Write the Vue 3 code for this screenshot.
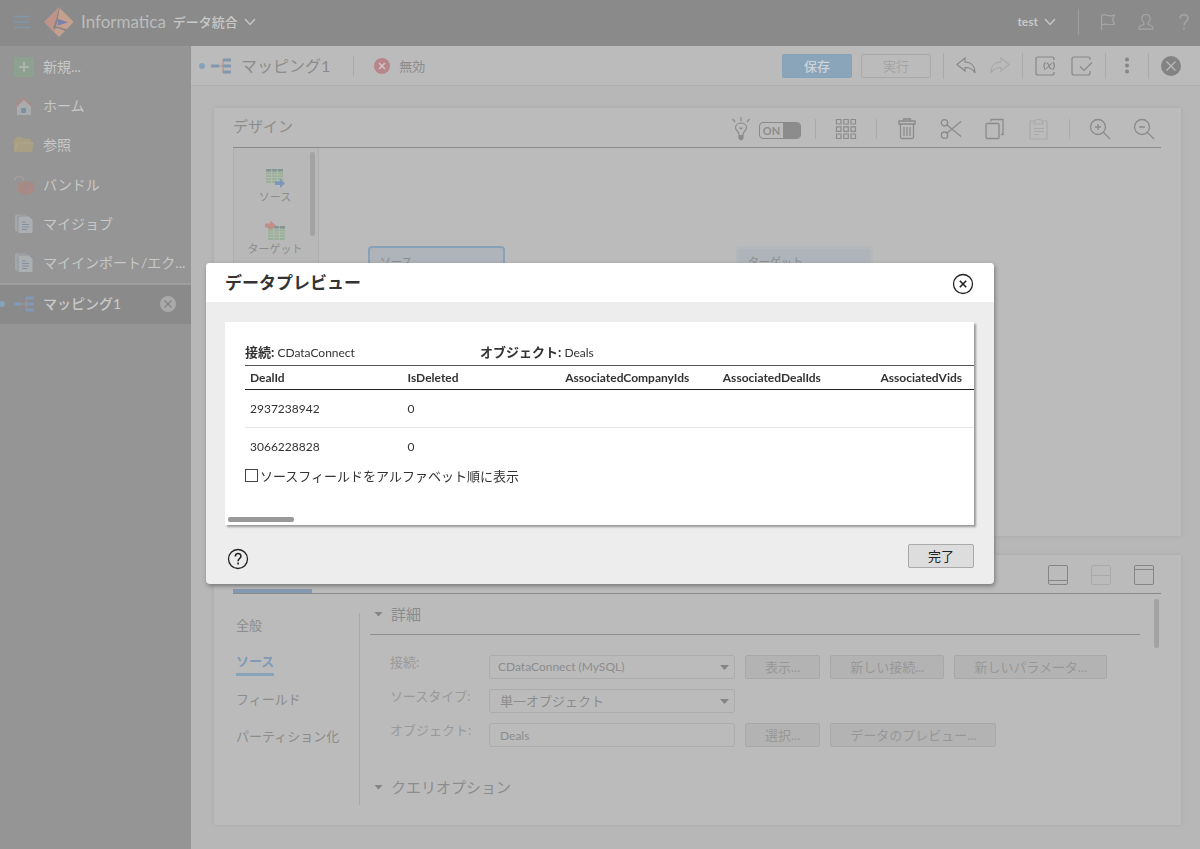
<script setup>
import { ref } from 'vue'

const navItems = [
  { id: 'new', label: '新規...' },
  { id: 'home', label: 'ホーム' },
  { id: 'browse', label: '参照' },
  { id: 'bundle', label: 'バンドル' },
  { id: 'jobs', label: 'マイジョブ' },
  { id: 'jobs', label: 'マイインポート/エク...' },
]
const columns = ['DealId', 'IsDeleted', 'AssociatedCompanyIds', 'AssociatedDealIds', 'AssociatedVids']
const rows = [
  ['2937238942', '0', '', '', ''],
  ['3066228828', '0', '', '', ''],
]
const propertyTabs = ['全般', 'ソース', 'フィールド', 'パーティション化']
const alphabetical = ref(false)
const connection = ref('CDataConnect (MySQL)')
const sourceType = ref('単一オブジェクト')
const objectName = ref('Deals')
</script>

<template>
  <div class="app">
    <header class="topbar">
      <button class="icon-btn menu" aria-label="メニュー">
        <svg width="16" height="14" viewBox="0 0 16 14" stroke="#7f97a8" stroke-width="1.4"><path d="M0 1.5h16M0 7h16M0 12.5h16" /></svg>
      </button>
      <svg class="logo" width="30" height="30" viewBox="0 0 90 90">
        <path d="M45 1 89 45 45 90 1 45Z" fill="#c4a18e" />
        <path d="M45 1 1 45 32 76 41 30Z" fill="#c0938a" />
        <path d="M45 2 38 32 28 62 33 68 39 48 47 4Z" fill="#858585" />
        <path d="M29 57 45 60 72 68 64 72 44 64 29 63Z" fill="#858585" />
        <path d="M40 35 72 46 42 56Z" fill="#7c80ad" />
      </svg>
      <span class="brand">Informatica</span>
      <button class="service">データ統合
        <svg width="12" height="8" viewBox="0 0 12 8" fill="none" stroke="#c5c5c5" stroke-width="1.4"><path d="m1 1 5 5.5L11 1" /></svg>
      </button>
      <div class="top-right">
        <button class="org">test
          <svg width="12" height="8" viewBox="0 0 12 8" fill="none" stroke="#c5c5c5" stroke-width="1.4"><path d="m1 1 5 5.5L11 1" /></svg>
        </button>
        <i class="top-sep"></i>
        <button class="icon-btn" aria-label="通知">
          <svg width="18" height="18" viewBox="0 0 18 18" fill="none" stroke="#a6a6a6" stroke-width="1.2"><path d="M2.500 17V2.500c3-2 5 0 7 .2 2 .4 4 .1 6-.7l-2 4.500 2 4.500c-3 1-4.500 1-6.500.5s-4-1-6.500.7" /></svg>
        </button>
        <button class="icon-btn" aria-label="ユーザー">
          <svg width="18" height="18" viewBox="0 0 18 18" fill="none" stroke="#a6a6a6" stroke-width="1.2"><path d="M6.800 9.500C3.500 6 4.500 1.500 9 1.500s5.500 4.500 2.200 8v2c2 .7 4.800.8 4.800 4.700H2c0-3.900 2.800-4 4.800-4.700Z" /></svg>
        </button>
        <button class="icon-btn" aria-label="ヘルプ">
          <svg width="18" height="18" viewBox="0 0 18 18" fill="none" stroke="#a6a6a6" stroke-width="1.500"><path d="M5 5.500C5 .5 13 .5 13 5c0 3.500-4 3.500-4 7.500M9 14.500v2" /></svg>
        </button>
      </div>
    </header>

    <div class="shell">
      <nav class="sidebar">
        <ul class="nav-list">
          <li v-for="item in navItems" :key="item.label">
            <a href="#" class="nav-link">
              <svg v-if="item.id === 'new'" width="20" height="20" viewBox="0 0 20 20"><rect width="20" height="20" rx="2" fill="#8ea08f" /><path d="M10 5v10M5 10h10" stroke="#b4bab4" stroke-width="1.500" /></svg>
              <svg v-else-if="item.id === 'home'" width="20" height="20" viewBox="0 0 20 20"><path d="M3 9v10h14V9l-7-6Z" fill="#a9abad" /><path d="m1.500 10.500 8.500-8 8.500 8M5 7V2.500" fill="none" stroke="#a98b88" stroke-width="1.800" /><rect x="7" y="12" width="5" height="5" rx="1" fill="#7d90a3" /></svg>
              <svg v-else-if="item.id === 'browse'" width="20" height="20" viewBox="0 0 20 20"><path d="M0 17V5l3-3h5l2 2h7v4h3l-2 9Z" fill="#a89f85" /><path d="M1 16 3 8h16" fill="none" stroke="#b0a78d" /></svg>
              <svg v-else-if="item.id === 'bundle'" width="20" height="20" viewBox="0 0 20 20"><path d="m4 8 8-2 8 2v9l-8 3-8-3Z" fill="#a98a85" /><path d="m4 8 7 2v10M11 10l9-2" fill="none" stroke="#9a8d8b" /><path d="M1 5c0-4 8-6 9 1" fill="none" stroke="#a5a09f" stroke-width="1.400" /></svg>
              <svg v-else width="20" height="20" viewBox="0 0 20 20"><path d="M1 2q0-1.500 1.500-1.500H12v17H2.500Q1 17.500 1 16Z" fill="#a3a6aa" /><path d="M4 3.500q0-1.500 1.500-1.500H15l4 4v12q0 1.500-1.500 1.500h-12Q4 19.500 4 18Z" fill="#acafb2" stroke="#949799" /><path d="M8 8h4M8 10.500h7M8 13h7M8 15.500h5" stroke="#8290a0" /></svg>
              {{ item.label }}
            </a>
          </li>
        </ul>
        <div class="nav-current">
          <i class="dot"></i>
          <a href="#" class="nav-link">
            <svg width="20" height="16" viewBox="0 0 20 16"><path d="M8 8h4M17 2h-5v12h5M12 8h5" fill="none" stroke="#a58d88" stroke-width="1.500" /><path d="M0 6.500h8v3H0zM12 .5h8v3h-8zM12 6.500h8v3h-8zM12 12.500h8v3h-8z" fill="#7f99b6" /></svg>
            マッピング1
          </a>
          <button class="icon-btn" aria-label="マッピング1を閉じる">
            <svg width="16" height="16" viewBox="0 0 16 16"><circle cx="8" cy="8" r="8" fill="#a9a9a9" /><path d="m4.500 4.500 7 7m0-7-7 7" stroke="#858585" stroke-width="1.300" /></svg>
          </button>
        </div>
      </nav>

      <main class="main">
        <div class="docbar">
          <i class="dot"></i>
          <svg class="map-icon" width="20" height="16" viewBox="0 0 20 16"><path d="M8 8h4M17 2h-5v12h5M12 8h5" fill="none" stroke="#b79c98" stroke-width="1.500" /><path d="M0 6.500h8v3H0zM12 .5h8v3h-8zM12 6.500h8v3h-8zM12 12.500h8v3h-8z" fill="#8398ae" /></svg>
          <h1>マッピング1</h1>
          <i class="sep status-sep"></i>
          <svg width="16" height="16" viewBox="0 0 16 16"><circle cx="8" cy="8" r="8" fill="#b8868a" /><path d="m5 5 6 6m0-6-6 6" stroke="#d0c4c4" stroke-width="1.500" /></svg>
          <span class="status">無効</span>
          <div class="doc-actions">
            <button class="btn primary">保存</button>
            <button class="btn ghost">実行</button>
            <i class="sep"></i>
            <div class="group">
              <button class="icon-btn" aria-label="元に戻す"><svg width="20" height="20" viewBox="0 0 20 20" fill="none" stroke="#888" stroke-width="1.200"><path d="M1 8.500 9 2v4c6 0 10 4 10 11-2-4-5-5.500-10-5.500V15Z" /></svg></button>
              <button class="icon-btn" aria-label="やり直し"><svg width="20" height="20" viewBox="0 0 20 20" fill="none" stroke="#a8a8a8" stroke-width="1.200"><path d="M19 8.500 11 2v4C5 6 1 10 1 17c2-4 5-5.500 10-5.500V15Z" /></svg></button>
            </div>
            <i class="sep"></i>
            <div class="group">
              <button class="icon-btn" aria-label="パラメータ"><svg width="22" height="20" viewBox="0 0 22 20" fill="none" stroke="#888" stroke-width="1.200"><path d="M19 4V3q0-2-2-2H3Q1 1 1 3v14q0 2 2 2h14q2 0 2-2v-1M10.500 6q-3 4 0 8M18 6q3 3.500-.5 8M11.500 7.500c3-1.500 2 6 5 5M17 7.500c-2 0-4 5-6 5" /></svg></button>
              <button class="icon-btn" aria-label="検証"><svg width="22" height="20" viewBox="0 0 22 20" fill="none" stroke="#888" stroke-width="1.200"><path d="M19 4V3q0-2-2-2H3Q1 1 1 3v14q0 2 2 2h14q2 0 2-2v-2M9 10.500l4 4 8-8" /></svg></button>
            </div>
            <i class="sep"></i>
            <button class="icon-btn" aria-label="その他"><svg width="18" height="18" viewBox="0 0 18 18" fill="#868686"><circle cx="9" cy="2.500" r="2" /><circle cx="9" cy="8.500" r="2" /><circle cx="9" cy="14.500" r="2" /></svg></button>
            <i class="sep"></i>
            <button class="icon-btn" aria-label="閉じる"><svg width="20" height="20" viewBox="0 0 20 20"><circle cx="10" cy="10" r="10" fill="#838383" /><path d="m5.500 5.500 9 9m0-9-9 9" stroke="#bbb" stroke-width="1.300" /></svg></button>
          </div>
        </div>

        <div class="workspace">
          <section class="card design">
            <div class="card-head">
              <h2>デザイン</h2>
              <div class="tools">
                <div class="toggle-group">
                  <svg width="22" height="24" viewBox="0 0 22 24" fill="none" stroke="#8b8b8b" stroke-width="1.200"><path d="M9 18c0-4-3.500-4-3.500-7.500 0-6 11-6 11 0 0 3.500-3.500 3.500-3.500 7.500M9.500 10.500l1.500 1.500 1.500-1.500M11 4V0M5 5 2.500 2M17 5l2.500-3" /><path d="M9 18.500h4v3l-2 1.500-2-1.500Z" fill="#8b8b8b" /></svg>
                  <button class="toggle" aria-pressed="true"><span>ON</span><i></i></button>
                </div>
                <i class="sep short"></i>
                <div class="tool-group">
                  <button class="icon-btn" aria-label="グリッド"><svg width="22" height="22" viewBox="0 0 22 22" fill="none" stroke="#8b8b8b" stroke-width="1.200"><path d="M1.500 1.500h4.500v4.500H1.500zM8.800 1.500h4.500v4.500H8.800zM16 1.500h4.500v4.500H16zM1.500 8.800h4.500v4.500H1.500zM8.800 8.800h4.500v4.500H8.800zM16 8.800h4.500v4.500H16zM1.500 16h4.500v4.500H1.500zM8.800 16h4.500v4.500H8.800zM16 16h4.500v4.500H16z" /></svg></button>
                </div>
                <i class="sep short"></i>
                <div class="tool-group">
                  <button class="icon-btn" aria-label="削除"><svg width="22" height="22" viewBox="0 0 22 22" fill="none" stroke="#8b8b8b" stroke-width="1.300"><path d="M3 3h16v3H3zM7.500 3V1h7v2M4.500 6v13q0 1.500 1.500 1.500h10q1.500 0 1.500-1.500V6M8 9v9M11 9v9M14 9v9" /></svg></button>
                  <button class="icon-btn" aria-label="切り取り"><svg width="22" height="22" viewBox="0 0 22 22" fill="none" stroke="#8b8b8b" stroke-width="1.300"><circle cx="4.500" cy="4.800" r="3.200" /><circle cx="4.500" cy="17.200" r="3.200" /><path d="m7 7 14 11.500M7 15 21 3.500" /></svg></button>
                  <button class="icon-btn" aria-label="コピー"><svg width="22" height="22" viewBox="0 0 22 22" fill="none" stroke="#8b8b8b" stroke-width="1.300"><rect x="2" y="5.500" width="13" height="15" rx="1" /><path d="M7 3.500V1.500h12v15h-2" /></svg></button>
                  <button class="icon-btn" aria-label="貼り付け"><svg width="22" height="22" viewBox="0 0 22 22" fill="none" stroke="#a9a9a9" stroke-width="1.200"><path d="M6 3H2v18h17V3h-4M6 6c0-6 9-6 9 0ZM6 10.500h10M6 13.500h10M6 16.500h5" /></svg></button>
                </div>
                <i class="sep short"></i>
                <div class="tool-group last">
                  <button class="icon-btn" aria-label="拡大"><svg width="22" height="22" viewBox="0 0 22 22" fill="none" stroke="#8b8b8b" stroke-width="1.300"><circle cx="9" cy="9" r="7.500" /><path d="M14.500 14.500 21 21M6 9h6M9 6v6" /></svg></button>
                  <button class="icon-btn" aria-label="縮小"><svg width="22" height="22" viewBox="0 0 22 22" fill="none" stroke="#8b8b8b" stroke-width="1.300"><circle cx="9" cy="9" r="7.500" /><path d="M14.500 14.500 21 21M6 9h6" /></svg></button>
                </div>
              </div>
            </div>
            <div class="canvas">
              <div class="palette">
                <button class="palette-item">
                  <svg width="20" height="20" viewBox="0 0 20 20"><path d="M1 1h17v3H1z" fill="#819690" /><path d="M1 4h17v11H1z" fill="#9bb098" /><path d="M1 4h17M1 6.800h17M1 9.500h17M1 12.200h17M6.700 1v14M12.300 1v14" stroke="#b8bdb7" stroke-width=".8" /><path d="M10 13.500h5v-3l5 5-5 4.500v-3h-5Z" fill="#7e96b9" /></svg>
                  ソース
                </button>
                <button class="palette-item">
                  <svg width="20" height="20" viewBox="0 0 20 20"><path d="M3 6h17v3H3z" fill="#819690" /><path d="M3 9h17v11H3z" fill="#9bb098" /><path d="M3 9h17M3 12h17M3 14.700h17M3 17.300h17M8.700 6v14M14.300 6v14" stroke="#b8bdb7" stroke-width=".8" /><path d="M0 3.500h5v-3l6 5-6 5v-3H0Z" fill="#c08f88" /></svg>
                  ターゲット
                </button>
                <i class="scroll-thumb"></i>
              </div>
              <div class="node source"><span>ソース</span></div>
              <div class="node target"><span>ターゲット</span></div>
            </div>
          </section>

          <section class="card props">
            <div class="props-head">
              <i class="active-tab"></i>
              <div class="layout-btns">
                <button class="icon-btn" aria-label="最小化"><svg width="20" height="20" viewBox="0 0 20 20" fill="none" stroke="#858585"><rect x=".5" y=".5" width="19" height="19" rx="1.500" /><path d="M1 15.500h18" /></svg></button>
                <button class="icon-btn" aria-label="分割"><svg width="20" height="20" viewBox="0 0 20 20" fill="none" stroke="#aaa"><rect x=".5" y=".5" width="19" height="19" rx="1.500" /><path d="M1 10.500h18" /></svg></button>
                <button class="icon-btn" aria-label="最大化"><svg width="20" height="20" viewBox="0 0 20 20" fill="none" stroke="#858585"><rect x=".5" y=".5" width="19" height="19" rx="1.500" /><path d="M1 4.500h18" /></svg></button>
              </div>
            </div>
            <div class="props-body">
              <div class="prop-tabs">
                <a v-for="tab in propertyTabs" :key="tab" href="#" :class="{ active: tab === 'ソース' }">{{ tab }}</a>
              </div>
              <div class="details">
                <h3 class="section ruled"><i class="caret"></i>詳細</h3>
                <form class="form" @submit.prevent>
                  <label for="connection">接続:</label>
                  <div class="field-row">
                    <span class="select-box rounded">
                      <select id="connection" v-model="connection"><option>CDataConnect (MySQL)</option></select>
                      <i class="caret"></i>
                    </span>
                    <button class="btn soft">表示...</button>
                    <button class="btn soft">新しい接続...</button>
                    <button class="btn soft">新しいパラメータ...</button>
                  </div>
                  <label for="source-type">ソースタイプ:</label>
                  <div class="field-row">
                    <span class="select-box">
                      <select id="source-type" v-model="sourceType"><option>単一オブジェクト</option></select>
                      <i class="caret"></i>
                    </span>
                  </div>
                  <label for="object">オブジェクト:</label>
                  <div class="field-row">
                    <input id="object" v-model="objectName" type="text" />
                    <button class="btn soft">選択...</button>
                    <button class="btn soft">データのプレビュー...</button>
                  </div>
                </form>
                <h3 class="section"><i class="caret"></i>クエリオプション</h3>
              </div>
              <i class="scroll-thumb"></i>
            </div>
          </section>
        </div>
      </main>
    </div>

    <div class="overlay">
      <div class="dialog" role="dialog" aria-modal="true" aria-labelledby="dialog-title">
        <div class="dialog-head">
          <h2 id="dialog-title">データプレビュー</h2>
          <button class="icon-btn" aria-label="閉じる"><svg width="22" height="22" viewBox="0 0 22 22" fill="none" stroke="#222"><circle cx="11" cy="11" r="9.500" stroke-width="1.300" /><path d="m7.800 7.800 6.400 6.400m0-6.400-6.400 6.400" stroke-width="1.600" /></svg></button>
        </div>
        <div class="preview">
          <div class="summary">
            <p><b>接続:</b> CDataConnect</p>
            <p><b>オブジェクト:</b> Deals</p>
          </div>
          <div class="table-wrap">
            <table>
              <thead><tr><th v-for="c in columns" :key="c" scope="col">{{ c }}</th></tr></thead>
              <tbody><tr v-for="r in rows" :key="r[0]"><td v-for="(v, i) in r" :key="i">{{ v }}</td></tr></tbody>
            </table>
          </div>
          <label class="check"><input v-model="alphabetical" type="checkbox" />ソースフィールドをアルファベット順に表示</label>
          <i class="h-thumb"></i>
        </div>
        <div class="dialog-foot">
          <button class="icon-btn" aria-label="ヘルプ"><svg width="22" height="22" viewBox="0 0 22 22" fill="none" stroke="#222"><circle cx="11" cy="11" r="9.500" stroke-width="1.300" /><path d="M8.300 8.500c0-4 5.600-3.800 5.600-.3 0 2.300-2.800 2.300-2.800 5M11.100 14.500v2" stroke-width="1.600" /></svg></button>
          <button class="btn done">完了</button>
        </div>
      </div>
    </div>
  </div>
</template>

<style>
body { background: #b7b7b7; }
</style>

<style scoped>
.app { min-height: 100vh; display: flex; flex-direction: column; font: 13px/20px Lato, "Noto Sans CJK JP", sans-serif; color: #8c8c8c; }
.app *, .app *::before { box-sizing: border-box; }
h1, h2, h3, p, ul { margin: 0; padding: 0; font-weight: 400; }
ul { list-style: none; }
a { color: inherit; text-decoration: none; }
button, input, select { font: inherit; color: inherit; margin: 0; }
button { padding: 0; border: 0; background: none; }
svg { display: block; flex: none; }
.icon-btn { display: flex; flex: none; }

.topbar { height: 46px; flex: none; background: #8a8a8a; display: flex; align-items: center; padding: 0 7px 2px 14px; color: #c8c8c8; }
.menu { margin-right: 14px; }
.brand { margin: 0 7px; font-size: 17px; color: #bcbcbc; }
.service, .org { display: flex; align-items: center; gap: 6px; font-weight: 500; }
.org { font-size: 12px; font-weight: 700; margin-right: 2px; }
.top-right { margin-left: auto; display: flex; align-items: center; gap: 20px; }
.top-sep { width: 1px; height: 26px; background: #9d9d9d; }

.shell { flex: 1; display: flex; }
.sidebar { width: 191px; flex: none; background: #959595; color: #c8c8c8; font-size: 14px; font-weight: 500; }
.nav-list { height: 239px; display: grid; grid-auto-rows: 1fr; padding-top: 1px; border-bottom: 2px solid #9e9e9e; }
.nav-list li { display: flex; align-items: center; }
.nav-link { display: flex; align-items: center; gap: 9px; margin-left: 14px; white-space: nowrap; }
.nav-current { height: 39px; background: #8a8a8a; display: flex; align-items: center; padding-bottom: 2px; }
.nav-current .dot { margin-left: -1px; margin-right: -5px; }
.nav-current .icon-btn { margin: 0 15px 0 auto; }
.dot { width: 6px; height: 6px; flex: none; border-radius: 50%; background: #85a3b8; }

.main { flex: 1; min-width: 0; display: flex; flex-direction: column; background: #b7b7b7; }
.docbar { height: 40px; flex: none; display: flex; align-items: center; padding: 0 19px 0 8px; background: #bbb; border-bottom: 1px solid #afafaf; }
.map-icon { margin: 0 10px 0 6px; }
h1 { font-size: 16px; }
.sep { width: 1px; height: 26px; flex: none; background: #aaa; }
.short { height: 20px; }
.status-sep { height: 20px; margin: 0 20px 0 23px; }
.status { margin-left: 9px; }
.doc-actions { margin-left: auto; display: flex; align-items: center; gap: 12px; }
.group { display: flex; gap: 14px; }
.btn { height: 24px; border: 1px solid #a9a9a9; border-radius: 2px; white-space: nowrap; line-height: 20px; }
.primary { width: 70px; background: #8aa5ba; border-color: #84a2b8; color: #cdd3d7; font-weight: 500; }
.ghost { width: 70px; margin-left: -3px; color: #a3a3a3; }

.workspace { flex: 1; display: flex; flex-direction: column; gap: 19px; padding: 22px 19px 24px 23px; }
.card { background: #bbb; box-shadow: 0 0 4px #a8a8a8; padding: 0 20px 0 19px; }
.design { flex: 1; display: flex; flex-direction: column; }
.card-head { height: 40px; display: flex; align-items: center; border-bottom: 1px solid #8a8a8a; }
.card-head h2 { font-size: 15px; padding-bottom: 3px; }
.tools { margin-left: auto; padding-right: 6px; padding-top: 2px; display: flex; align-items: center; gap: 14px; }
.tool-group { display: flex; gap: 22px; padding: 0 5px; }
.last { padding-right: 0; }
.toggle-group { display: flex; align-items: center; gap: 7px; }
.toggle { width: 42px; height: 17px; margin-top: 3px; border: 1px solid #8a8a8a; border-radius: 4px; display: flex; overflow: hidden; font-size: 11px; font-weight: 700; line-height: 15px; }
.toggle span { flex: 1; }
.toggle i { width: 17px; background: #8c8c8c; }
.canvas { flex: 1; position: relative; display: flex; }
.palette { position: relative; width: 86px; background: #b8b8b8; border: solid #afafaf; border-width: 0 1px; padding-top: 20px; font-size: 11px; }
.palette-item { width: 100%; height: 52px; display: flex; flex-direction: column; align-items: center; line-height: 18px; padding-right: 2px; }
.palette .scroll-thumb { position: absolute; top: 4px; right: 3px; width: 5px; height: 84px; }
.scroll-thumb { background: #a3a3a3; border-radius: 2px; }
.node { position: absolute; top: 98px; width: 137px; height: 70px; border-radius: 4px; padding: 4px 10px; background: #aeb4b9; font-size: 11px; }
.node.source { left: 135px; border: 2px solid #86a2b8; }
.node.target { left: 503px; border: 3px solid #b5b8bb; padding: 3px 9px; }

.props { height: 270px; }
.props-head { height: 39px; display: flex; align-items: flex-end; justify-content: space-between; border-bottom: 1px solid #8a8a8a; }
.active-tab { width: 79px; height: 4px; background: #8398b2; }
.layout-btns { display: flex; gap: 23px; padding: 0 7px 8px 0; }
.props-body { display: flex; position: relative; }
.prop-tabs { width: 127px; height: 192px; margin-top: 19px; padding-top: 2px; display: flex; flex-direction: column; align-items: flex-start; gap: 15px; border-right: 1px solid #a9a9a9; padding-left: 3px; }
.prop-tabs a { height: 22px; line-height: 20px; white-space: nowrap; }
.prop-tabs .active { color: #7f9ab5; font-weight: 700; border-bottom: 3px solid #86a5bb; height: 24px; line-height: 19px; margin-bottom: -2px; }
.details { flex: 1; margin: 0 21px 0 10px; }
.section { font-size: 15px; display: flex; align-items: center; gap: 8px; padding-left: 4px; height: 40px; line-height: 22px; }
.ruled { height: 41px; border-bottom: 1px solid #8f8f8f; }
.caret { width: 9px; height: 5px; flex: none; background: #858585; clip-path: polygon(0 0, 100% 0, 50% 100%); }
.form { display: grid; grid-template-columns: 99px 1fr; grid-auto-rows: 24px; row-gap: 10px; padding: 20px 0 20px 20px; }
.form label { margin-top: -3px; color: #999; }
.field-row { display: flex; gap: 10px; }
.select-box { position: relative; width: 246px; }
.select-box .caret { position: absolute; right: 6px; top: 10px; }
select, input[type="text"] { appearance: none; width: 246px; height: 24px; padding: 0 10px; border: 1px solid #acacac; border-radius: 3px; background: transparent; line-height: 20px; outline: 0; }
.rounded select { padding-left: 8px; font-size: 12px; }
input[type="text"] { font-size: 12px; }
.soft { background: #b3b3b3; color: #979797; padding: 0 19px; border-color: #a8a8a8; }
.props-body > .scroll-thumb { position: absolute; right: 2px; top: 5px; width: 5px; height: 49px; }

.overlay { position: fixed; inset: 0; display: flex; align-items: center; justify-content: center; padding-bottom: 2px; }
.dialog { width: 788px; max-width: 100%; background: #ededed; border-radius: 4px; box-shadow: 1px 2px 4px #777; color: #333; overflow: hidden; }
.dialog-head { height: 39px; background: #fff; display: flex; align-items: center; justify-content: space-between; padding: 0 20px 0 19px; }
.dialog-head h2 { font-size: 17px; font-weight: 700; }
.dialog-head .icon-btn { padding-top: 3px; }
.preview { position: relative; margin: 20px 20px 0 19px; height: 203px; background: #fff; box-shadow: 2px 2px 2px #999; padding: 20px 0 0 20px; }
.summary { display: grid; grid-template-columns: 235px 1fr; height: 23px; font-size: 12px; }
.summary b { font-size: 13px; }
.table-wrap { overflow: hidden; }
table { width: 788px; table-layout: fixed; border-collapse: collapse; font-size: 12px; }
th, td { text-align: left; padding: 0 5px; }
th { height: 24px; line-height: 20px; border-top: 1px solid #555; border-bottom: 1px solid #222; color: #333; }
td { height: 38px; border-bottom: 1px solid #e6e6e6; }
tbody tr:last-child td { border: 0; }
.check { display: flex; align-items: center; gap: 2px; }
.check input { appearance: none; width: 13px; height: 13px; border: 1px solid #444; background: #fff; }
.h-thumb { position: absolute; left: 3px; bottom: 3px; width: 66px; height: 5px; border-radius: 2px; background: #999; }
.dialog-foot { height: 59px; display: flex; align-items: center; justify-content: space-between; padding: 9px 20px 0 21px; }
.done { width: 66px; background: #ddd; color: #222; margin-bottom: 6px; line-height: 18px; }
</style>
